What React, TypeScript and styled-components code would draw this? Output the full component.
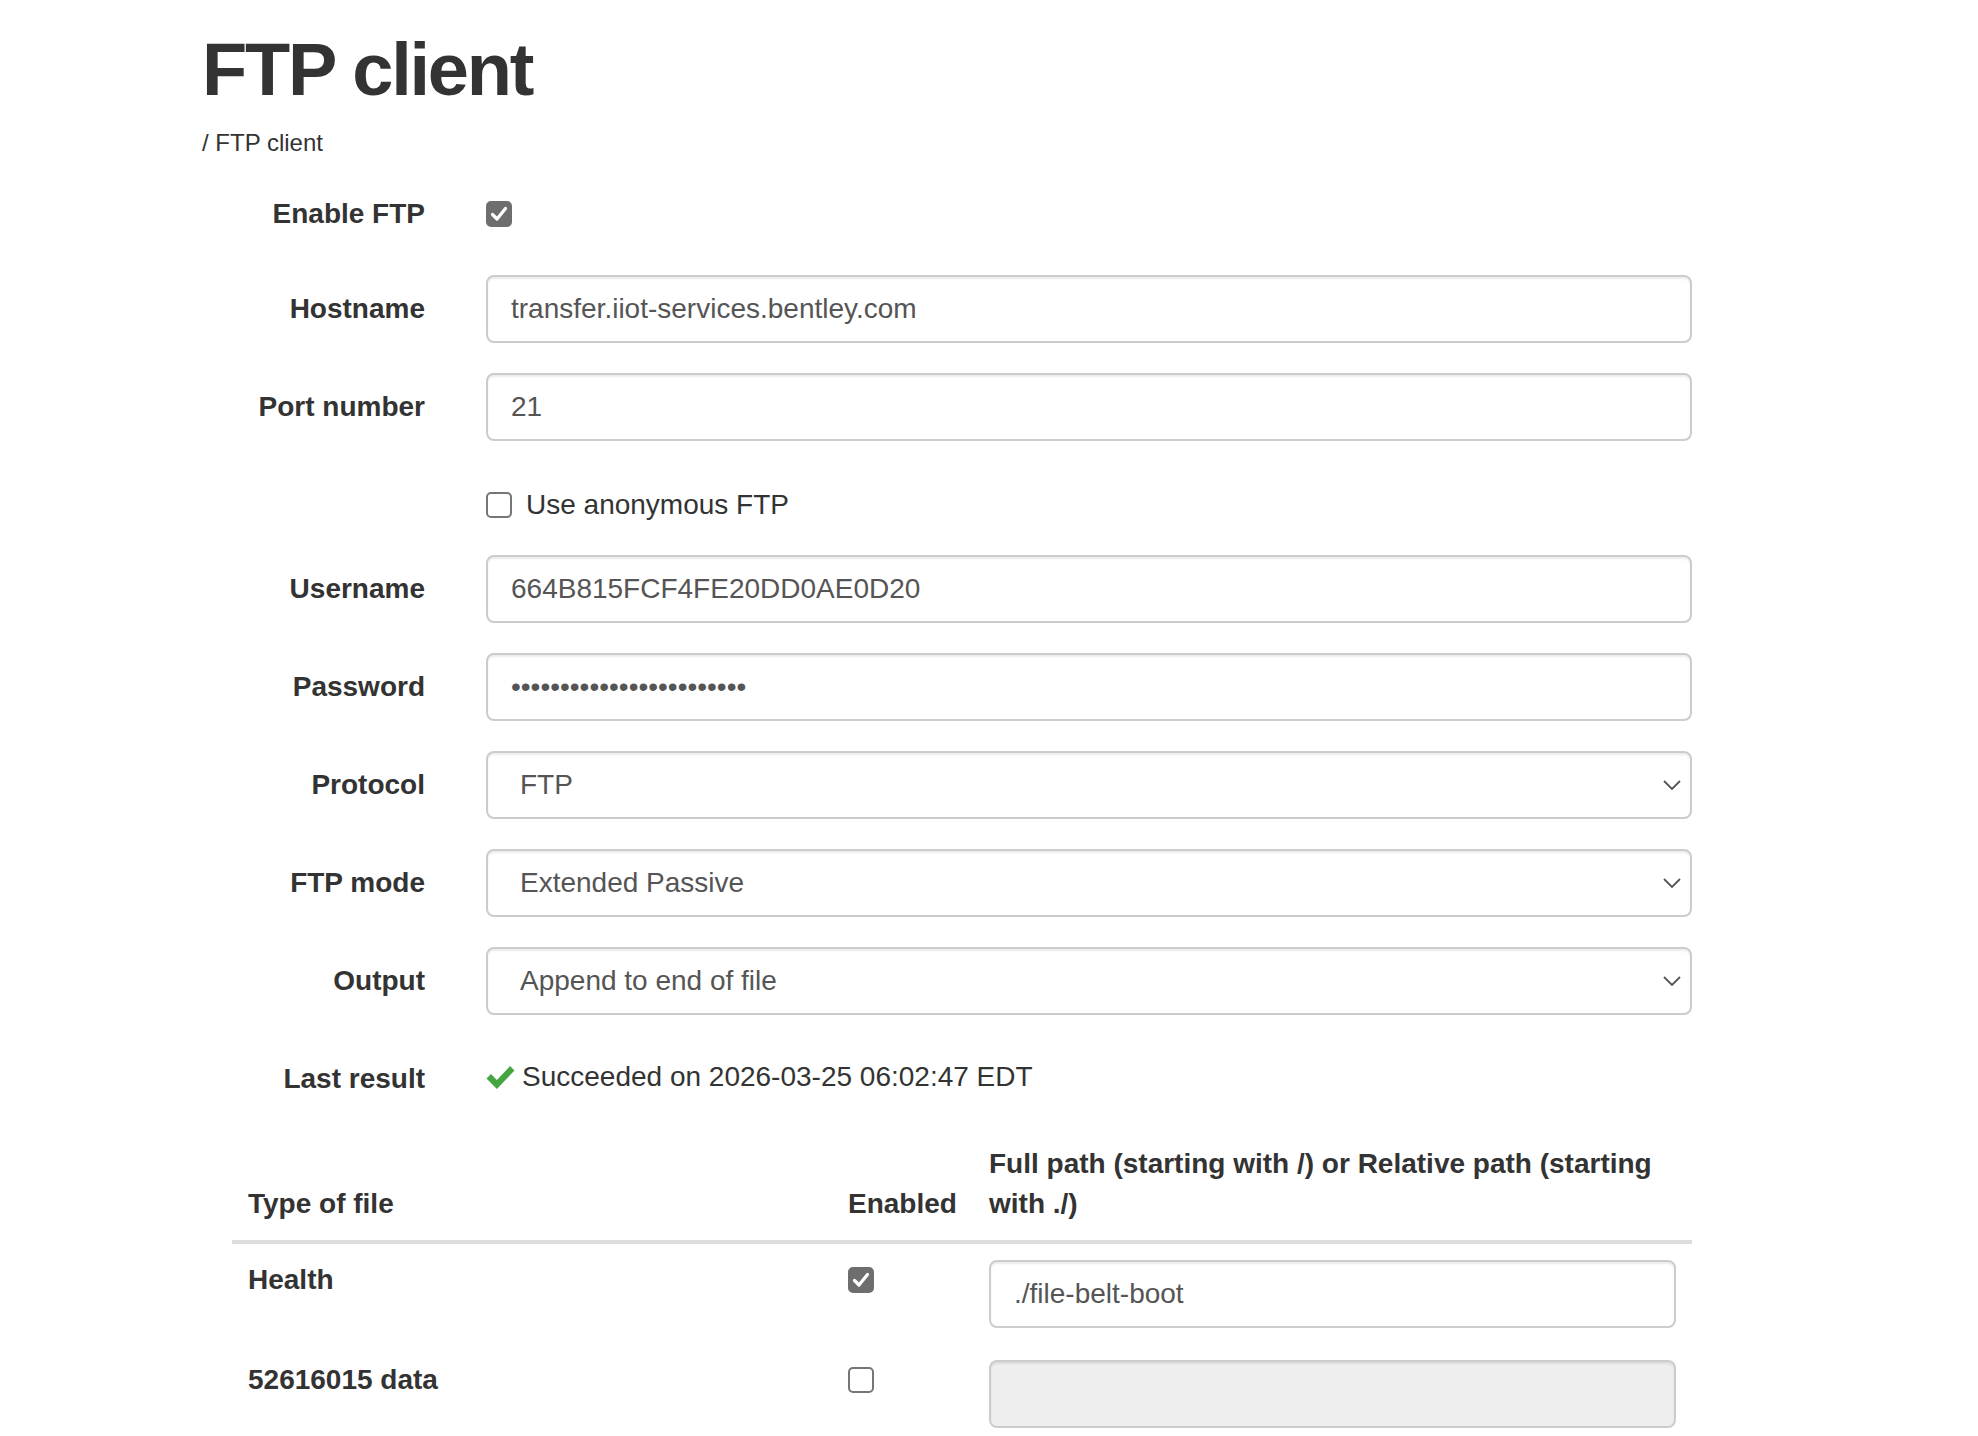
import * as React from 'react';
import styled, {createGlobalStyle} from 'styled-components';

const GlobalStyle = createGlobalStyle`
  body {
    margin: 0;
    background: #fff;
    color: #333;
    font-family: "Liberation Sans", Arial, Helvetica, sans-serif;
  }
`;

const Page = styled.div`
  padding: 29px 0 40px 202px;
`;

const Title = styled.h1`
  margin: 0;
  font-size: 74px;
  line-height: 81px;
  font-weight: bold;
  letter-spacing: -2.2px;
  color: #333;
`;

const Crumb = styled.div`
  margin-top: 16px;
  font-size: 24px;
  line-height: 34px;
  color: #333;
`;

const Form = styled.div`
  margin: 20px 0 0 30px;
  width: 1460px;
`;

const Row = styled.div<{ $mb?: number }>`
  display: grid;
  grid-template-columns: 193px 1fr;
  column-gap: 61px;
  margin-bottom: ${p => p.$mb ?? 30}px;
`;

const Label = styled.label`
  text-align: right;
  font-weight: bold;
  font-size: 28px;
  line-height: 40px;
  padding-top: 14px;
  white-space: nowrap;
`;

const CheckLine = styled.div`
  display: flex;
  align-items: center;
  gap: 14px;
  padding-top: 14px;
  height: 40px;
  font-size: 28px;
  line-height: 40px;
`;

const Box = styled.span<{ $on?: boolean }>`
  display: inline-flex;
  align-items: center;
  justify-content: center;
  box-sizing: border-box;
  width: 26px;
  height: 26px;
  border-radius: 5px;
  border: 2px solid ${p => (p.$on ? '#6e6e6e' : '#767676')};
  background: ${p => (p.$on ? '#6e6e6e' : '#fff')};
  flex: none;
`;

const Field = styled.input`
  display: block;
  box-sizing: border-box;
  width: 100%;
  height: 68px;
  padding: 0 23px;
  border: 2px solid #ccc;
  border-radius: 8px;
  box-shadow: inset 0 2px 2px rgba(0, 0, 0, 0.075);
  background: ${p => (p.disabled ? '#eee' : '#fff')};
  font-family: inherit;
  font-size: 28px;
  color: #555;
  outline: none;
`;

const Select = styled.div`
  display: flex;
  align-items: center;
  justify-content: space-between;
  box-sizing: border-box;
  height: 68px;
  padding: 0 8px 0 32px;
  border: 2px solid #ccc;
  border-radius: 8px;
  box-shadow: inset 0 2px 2px rgba(0, 0, 0, 0.075);
  font-size: 28px;
  color: #555;
`;

const Static = styled.div`
  display: flex;
  align-items: center;
  gap: 7px;
  padding-top: 10px;
  font-size: 28px;
  line-height: 40px;
`;

const FileTable = styled.table`
  margin-left: 30px;
  width: 1460px;
  table-layout: fixed;
  border-collapse: collapse;
  font-size: 28px;
  line-height: 40px;

  th {
    padding: 16px;
    text-align: left;
    vertical-align: bottom;
    font-weight: bold;
    border-bottom: 4px solid #ddd;
  }

  td {
    padding: 16px;
    vertical-align: top;
  }
`;

const Name = styled.td`
  font-weight: bold;
`;

const BoxCell = styled.td`
  && {
    padding-top: 23px;
  }
  line-height: 0;
`;

function CheckBox({on}: { on?: boolean }) {
  return (
    <Box $on={on}>
      {on && (
        <svg width="18" height="16" viewBox="0 0 18 16">
          <path d="M2.5 8.5 L7 13 L15.5 2.5" fill="none" stroke="#fff" strokeWidth="3.2"
                strokeLinecap="round" strokeLinejoin="round"/>
        </svg>
      )}
    </Box>
  );
}

function Chevron() {
  return (
    <svg width="20" height="12" viewBox="0 0 20 12">
      <path d="M2 2 L10 10 L18 2" fill="none" stroke="#555" strokeWidth="1.8"/>
    </svg>
  );
}

// heavy green tick shown before the last transfer status
function OkMark() {
  return (
    <svg width="29" height="25" viewBox="0 0 28 24">
      <path d="M0.5 13 L4.8 8.7 L10.5 14.4 L23.2 1 L27.5 5.3 L10.5 23 Z" fill="#45a540"/>
    </svg>
  );
}

const selects = [
  {label: 'Protocol', value: 'FTP'},
  {label: 'FTP mode', value: 'Extended Passive'},
  {label: 'Output', value: 'Append to end of file'},
];

export default function App() {
  return (
    <Page>
      <GlobalStyle/>
      <Title>FTP client</Title>
      <Crumb>/ FTP client</Crumb>
      <Form>
        <Row $mb={41}>
          <Label>Enable FTP</Label>
          <CheckLine><CheckBox on/></CheckLine>
        </Row>
        <Row>
          <Label>Hostname</Label>
          <Field readOnly value="transfer.iiot-services.bentley.com"/>
        </Row>
        <Row>
          <Label>Port number</Label>
          <Field readOnly value="21"/>
        </Row>
        <Row>
          <span/>
          <CheckLine><CheckBox/>Use anonymous FTP</CheckLine>
        </Row>
        <Row>
          <Label>Username</Label>
          <Field readOnly value="664B815FCF4FE20DD0AE0D20"/>
        </Row>
        <Row>
          <Label>Password</Label>
          <Field readOnly type="password" value="xxxxxxxxxxxxxxxxxxxxxxxx"/>
        </Row>
        {selects.map(s => (
          <Row key={s.label}>
            <Label>{s.label}</Label>
            <Select>
              <span>{s.value}</span>
              <Chevron/>
            </Select>
          </Row>
        ))}
        <Row $mb={29}>
          <Label>Last result</Label>
          <Static><OkMark/>Succeeded on 2026-03-25 06:02:47 EDT</Static>
        </Row>
      </Form>
      <FileTable>
        <colgroup>
          <col style={{width: 600}}/>
          <col style={{width: 141}}/>
          <col/>
        </colgroup>
        <thead>
        <tr>
          <th>Type of file</th>
          <th>Enabled</th>
          <th>Full path (starting with /) or Relative path (starting with ./)</th>
        </tr>
        </thead>
        <tbody>
        <tr>
          <Name>Health</Name>
          <BoxCell><CheckBox on/></BoxCell>
          <td><Field readOnly value="./file-belt-boot"/></td>
        </tr>
        <tr>
          <Name>52616015 data</Name>
          <BoxCell><CheckBox/></BoxCell>
          <td><Field disabled value=""/></td>
        </tr>
        </tbody>
      </FileTable>
    </Page>
  );
}
